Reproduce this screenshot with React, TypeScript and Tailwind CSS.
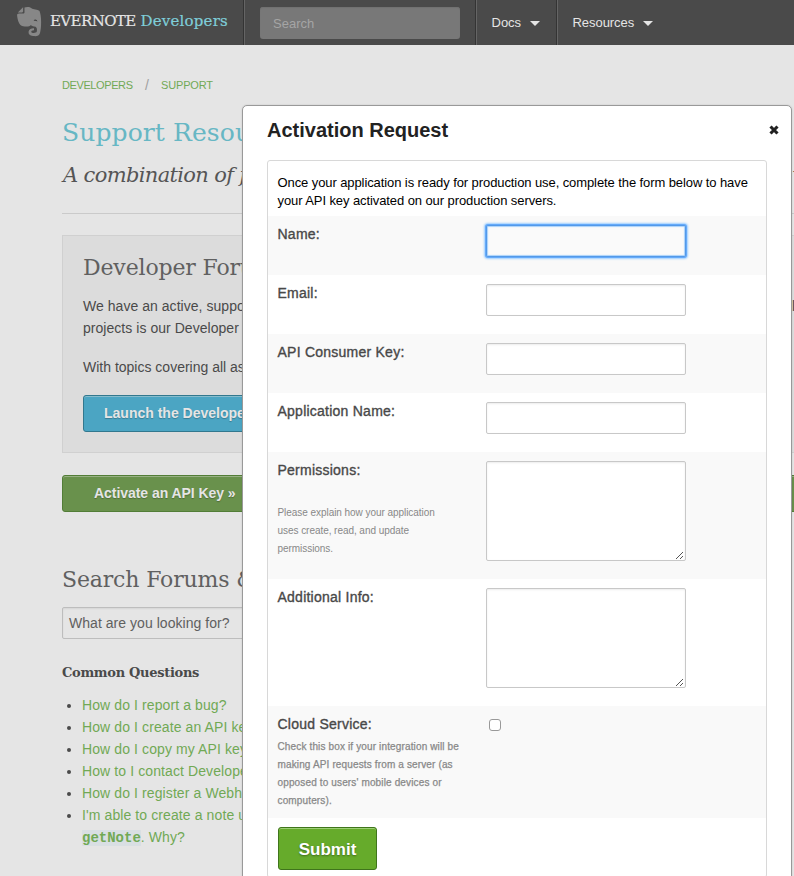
import React from "react";

const slab = "font-['DejaVu_Serif',serif]";

function Elephant() {
  return (
    <svg width="26" height="31" viewBox="0 0 26 31" className="mt-[6px] ml-[16px] shrink-0">
      <path
        fill="#878787"
        d="M8.5 1.5C10.5 .6 14 .7 15.5 2.2C17 3.4 21.8 3.1 23.5 5C25.7 10 25.5 22 24 27C23.2 30 20.5 30.5 17 30C13.5 29.4 12.2 28 12.6 25.5C13 23 15.5 22.1 18 22.2V24.3C15.8 24.4 15.2 25 15.3 26C15.5 27.2 20.3 27.5 20.8 25.5C21.3 23.3 20.8 21.5 19.5 20.8C18 20.1 15.8 20.6 14.8 19C14 20.6 10.5 20.8 7 20.2C3 19.6 1.6 14 1.1 9.5C1 8.3 1.8 7.6 3 7.6H7C8 7.6 8.5 7.1 8.5 6.2Z"
      />
      <path fill="#878787" d="M1.8 6.4L7.1 1.2V5.3C7.1 6.1 6.8 6.4 6 6.4Z" />
      <path fill="#3c3c3c" d="M17.7 15C18 12.8 20.9 12.9 21.4 15.5C20.3 14.8 19.2 14.7 17.7 15Z" />
    </svg>
  );
}

const divider = "border-l border-[#343434] shadow-[inset_1px_0_0_#656565]";

function Caret() {
  return <span className="mt-px ml-[9px] border-x-[5px] border-t-[5px] border-x-transparent border-t-[#e5e5e5]" />;
}

function Header() {
  return (
    <header className="flex h-[45px] bg-[#4a4a4a] text-[13px] text-[#e5e5e5]">
      <div className="flex w-[243px] shrink-0">
        <Elephant />
        <div className={`${slab} mt-[9px] ml-[8px] flex text-[15px] leading-6 whitespace-nowrap [-webkit-text-stroke:0.2px]`}>
          <span className="w-[90.5px] tracking-[-0.6px]">EVERNOTE</span>
          <span className="tracking-[0.2px] text-[#7fced9]">Developers</span>
        </div>
      </div>
      <div className={`${divider} w-[232px] shrink-0 pt-[7px] pl-[16px]`}>
        <div className="h-8 w-[200px] rounded-[3px] bg-[#787878] pl-[13px] leading-[33px] text-[#a5a5a5] shadow-[inset_0_1px_1px_#707070]">Search</div>
      </div>
      <div className={`${divider} flex w-[81px] shrink-0 items-center pl-[15.5px]`}>Docs<Caret /></div>
      <div className={`${divider} flex flex-1 items-center pl-[15.5px] tracking-[-0.05px]`}>Resources<Caret /></div>
    </header>
  );
}

function Questions() {
  const items = [
    "How do I report a bug?",
    "How do I create an API key?",
    "How do I copy my API key to production?",
    "How to I contact Developer Support?",
    "How do I register a Webhook?",
  ];
  return (
    <ul className="mt-[11px] ml-[20px] w-[240px] list-disc text-[14px] leading-[22px] tracking-[0.1px] whitespace-nowrap text-[#71a955] marker:text-[#4a4a4a]">
      {items.map((q) => <li key={q}>{q}</li>)}
      <li>
        I'm able to create a note using<br />
        <code className="bg-[#d9dfe3] font-['Liberation_Mono',monospace] text-[14px] leading-none font-bold tracking-normal">getNote</code>. Why?
      </li>
    </ul>
  );
}

function Page() {
  return (
    <main className="w-[1000px] pl-[62px] text-[14px] text-[#4a4a4a]">
      <nav className="mt-[32px] flex text-[11px] leading-4 text-[#71a955]">
        <span className="w-[71px] tracking-[-0.4px]">DEVELOPERS</span>
        <span className="w-[28px] text-center text-[14px] text-[#a0a0a0]">/</span>
        <span className="tracking-[-0.15px]">SUPPORT</span>
      </nav>
      <h1 className={`${slab} mt-[20px] text-[25px] leading-[40px] tracking-[0.1px] whitespace-nowrap text-[#67b7c4]`}>Support Resources</h1>
      <div className={`${slab} mt-[4px] flex w-[940px] pl-px text-[21px] leading-[36px] tracking-[-0.65px] whitespace-nowrap text-[#555] italic`}>
        <span className="w-[729px]">A combination of forums, questions and answers</span>
        <span>w</span>
      </div>
      <hr className="mt-[20px] border-[#cacaca]" />
      <section className="mt-[21px] h-[218px] border border-[#d0d0d0] bg-[#dcdcdc] pl-[20px] whitespace-nowrap">
        <h2 className={`${slab} mt-[14px] text-[22px] leading-9 tracking-[-0.15px] text-[#606060]`}>Developer Forum</h2>
        <div className="mt-[9px] flex leading-[22px] tracking-[0.04px]">
          <p className="w-[709px]">We have an active, supportive community<br />projects is our Developer Forum</p>
          <p>l</p>
        </div>
        <p className="mt-[17px] leading-[22px]">With topics covering all aspects of development</p>
        <div className="mt-[17px] h-[37px] w-[300px] rounded-[3px] border border-[#32788e] bg-[#4ba5c3] pl-[20px] leading-[34px] font-bold text-[#e5e5e5] shadow-[inset_0_1px_0_#88bdcd] [text-shadow:0_1px_1px_#00000040]">Launch the Developer Forum »</div>
      </section>
      <div className="mt-[22px] h-[37px] w-[860px] rounded-[3px] border border-[#527d37] bg-[#69914c] pl-[31px] leading-[34px] font-bold tracking-[-0.05px] text-[#e5e5e5] shadow-[inset_0_1px_0_#98b184] [text-shadow:0_1px_1px_#00000040]">Activate an API Key »</div>
      <h2 className={`${slab} mt-[50px] text-[22px] leading-9 tracking-[-0.15px] text-[#606060]`}>Search Forums &amp; Questions</h2>
      <div className="mt-[9px] h-8 w-[300px] rounded-[2px] border border-[#bdbdbd] pl-[6px] leading-[31px] tracking-[0.04px] text-[#606060] shadow-[inset_0_1px_2px_#00000012]">What are you looking for?</div>
      <h3 className={`${slab} mt-[23px] text-[13px] leading-[22px] font-bold tracking-[-0.3px]`}>Common Questions</h3>
      <div className="-mt-px"><Questions /></div>
    </main>
  );
}

const field = "block w-[200px] rounded-[2px] border border-[#c8c8c8] bg-white shadow-[inset_0_1px_2px_#00000014]";

function Area() {
  return (
    <div className={`${field} flex h-[100px] items-end justify-end`}>
      <svg width="9" height="9" viewBox="0 0 9 9" shapeRendering="crispEdges" className="mr-px mb-px">
        {[0, 1, 2, 3, 4, 5, 6].map((n) => <rect key={n} x={1 + n} y={8 - n} width="1" height="1" fill="#555" />)}
        {[0, 1, 2].map((n) => <rect key={`s${n}`} x={5 + n} y={8 - n} width="1" height="1" fill="#555" />)}
      </svg>
    </div>
  );
}

function Row({ label, hint, className, children }: { label: string; hint?: React.ReactNode; className: string; children: React.ReactNode }) {
  return (
    <div className={`flex pt-[9px] pl-[9.5px] ${className}`}>
      <div className="w-[208.5px] shrink-0 whitespace-nowrap">
        <div className="text-[14px] leading-[18px] tracking-[0.24px] text-[#484848] [-webkit-text-stroke:0.35px_#484848]">{label}</div>
        {hint}
      </div>
      {children}
    </div>
  );
}

function Modal() {
  return (
    <div role="dialog" className="absolute top-[105px] left-[242px] h-[800px] w-[550px] rounded-[5px] border border-[#999] bg-white px-[24px] shadow-[0_0_2px_#0002]">
      <div className="flex h-[54px] justify-between pt-[10px]">
        <h2 className="text-[20px] leading-[28px] font-bold text-[#222]">Activation Request</h2>
        <svg width="10" height="10" viewBox="0 0 10 10" className="mt-[8.5px] -mr-[11.5px]">
          <path d="M1.5 1.5L8.5 8.5M8.5 1.5L1.5 8.5" stroke="#222" strokeWidth="3.1" />
        </svg>
      </div>
      <form className="h-[718px] rounded-[3px] border border-[#d8d8d8]">
        <p className="h-[55px] pt-[13px] pl-[9.5px] text-[13px] leading-[18px] tracking-[-0.09px] whitespace-nowrap text-black">
          Once your application is ready for production use, complete the form below to have<br />your API key activated on our production servers.
        </p>
        <Row label="Name:" className="h-[59px] bg-[#f9f9f9]">
          <div className="h-8 w-[200px] rounded-[2px] border border-[#5399e8] bg-[#fafafa] shadow-[0_0_0_1px_#65aafa,0_0_2px_2px_#9cceff,inset_0_0_1px_1px_#a9d2fb]" />
        </Row>
        <Row label="Email:" className="h-[59px]"><div className={`${field} h-8`} /></Row>
        <Row label="API Consumer Key:" className="h-[59px] bg-[#f9f9f9]"><div className={`${field} h-8`} /></Row>
        <Row label="Application Name:" className="h-[59px]"><div className={`${field} h-8`} /></Row>
        <Row
          label="Permissions:"
          className="h-[127px] bg-[#f9f9f9]"
          hint={<p className="mt-[25px] text-[10px] leading-[18px] tracking-[-0.05px] text-[#888]">Please explain how your application<br />uses create, read, and update<br />permissions.</p>}
        >
          <Area />
        </Row>
        <Row label="Additional Info:" className="h-[127px]"><Area /></Row>
        <Row
          label="Cloud Service:"
          className="h-[112px] bg-[#f9f9f9]"
          hint={<p className="mt-[5px] text-[10px] leading-[18px] tracking-[0.14px] text-[#888] [-webkit-text-stroke:0.25px_#888]">Check this box if your integration will be<br />making API requests from a server (as<br />opposed to users' mobile devices or<br />computers).</p>}
        >
          <div className="mt-[4px] ml-[3px] size-3 rounded-[3px] border border-[#999] bg-white" />
        </Row>
        <div className="mt-[9px] ml-[10px] h-[43px] w-[99px] rounded-[3px] border border-[#3f751b] bg-[#66ab2b] text-center text-[17px] leading-[43px] font-bold text-white shadow-[inset_0_1px_0_#9dce75] [text-shadow:0_1px_2px_#00000060]">Submit</div>
      </form>
    </div>
  );
}

export default function App() {
  return (
    <div className="relative h-[876px] w-[794px] overflow-hidden bg-[#e5e5e5] font-['Liberation_Sans',sans-serif]">
      <Header />
      <Page />
      <Modal />
    </div>
  );
}
